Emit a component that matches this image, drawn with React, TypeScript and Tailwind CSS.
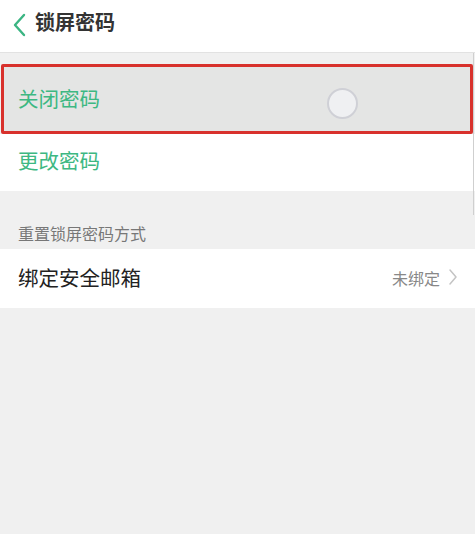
import React from "react";

export default function App() {
  const font = { fontFamily: '"Noto Sans CJK SC", "Noto Sans", sans-serif' };
  return (
    <div className="relative w-[475px] h-[534px] bg-[#f0f0f0] overflow-hidden" style={font}>
      <div className="h-[53px] bg-white border-b border-[#e2e2e2] flex items-center">
        <svg width="16" height="24" viewBox="0 0 16 24" className="ml-[11px] mt-[-2px]">
          <path d="M13 2 L4 12 L13 22" fill="none" stroke="#3bb583" strokeWidth="2.4" strokeLinecap="round" strokeLinejoin="round" />
        </svg>
        <span className="ml-[8px] mt-[-8px] text-[20px] font-bold text-[#333] leading-none">锁屏密码</span>
      </div>
      <div className="h-[11px]" />
      <div className="relative ml-[1px] mr-[2px] h-[70px] border-[3px] border-[#d8312c] rounded-[2px] bg-[#e4e5e4] flex items-center">
        <span className="ml-[14px] mt-[-2px] text-[20.5px] text-[#3db882] leading-none">关闭密码</span>
        <div className="absolute left-[323px] top-[21px] w-[31px] h-[31px] rounded-full border-[2px] border-[#cfd0d6] bg-[#eff0f2]" />
      </div>
      <div className="h-[57px] bg-white flex items-center">
        <span className="ml-[18px] mt-[-4px] text-[20.5px] text-[#3db882] leading-none">更改密码</span>
      </div>
      <div className="h-[58px] flex items-end pb-[8px]">
        <span className="ml-[18px] text-[16px] text-[#777] leading-none">重置锁屏密码方式</span>
      </div>
      <div className="h-[59px] bg-white flex items-center">
        <span className="ml-[18px] mt-[-2px] text-[20.5px] text-[#222] leading-none">绑定安全邮箱</span>
        <span className="ml-auto mt-[-2px] text-[16px] text-[#888] leading-none">未绑定</span>
        <svg width="10" height="18" viewBox="0 0 10 18" className="ml-[8px] mr-[17px] mt-[-4px]">
          <path d="M2 2 L8 9 L2 16" fill="none" stroke="#c4c4c4" strokeWidth="1.5" strokeLinecap="round" strokeLinejoin="round" />
        </svg>
      </div>
      <div className="absolute right-[1px] top-[53px] w-[1px] h-[162px] bg-[#cfcfcf]" />
    </div>
  );
}
